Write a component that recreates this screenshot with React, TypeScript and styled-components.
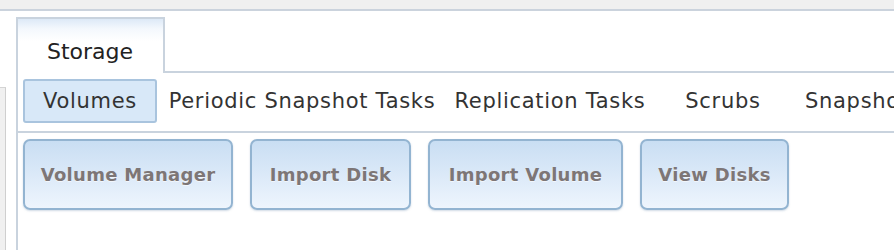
import React from "react";
import styled, { createGlobalStyle } from "styled-components";

const Global = createGlobalStyle`
  html, body { margin: 0; padding: 0; background: #ffffff; }
  body { font-family: "DejaVu Sans", Verdana, sans-serif; overflow: hidden; }
`;

const Page = styled.div`
  width: 894px;
  height: 250px;
  display: flex;
  flex-direction: column;
  background: #ffffff;
`;

const TopBar = styled.div`
  height: 9px;
  background: #f0f0f0;
  border-bottom: 2px solid #cbd3dd;
  flex-shrink: 0;
`;

const Main = styled.div`
  flex: 1;
  display: flex;
  padding-top: 6px;
  min-height: 0;
`;

const LeftStub = styled.div`
  width: 5px;
  margin-top: 70px;
  background: #f0f0f0;
  border-top: 1px solid #d4d4d4;
  border-right: 1px solid #cfcfcf;
  margin-right: 10px;
  flex-shrink: 0;
`;

const TabContainer = styled.div`
  flex: 1;
  display: flex;
  flex-direction: column;
  border-left: 2px solid #c9d3de;
  min-width: 0;
`;

const TabStrip = styled.div`
  display: flex;
  height: 56px;
  flex-shrink: 0;
`;

const Tab = styled.div`
  width: 147px;
  border-top: 2px solid #c9d3de;
  border-right: 2px solid #c9d3de;
  background: linear-gradient(to bottom, #dde9f7 0px, #f4f8fd 10px, #ffffff 22px);
  display: flex;
  align-items: flex-end;
  padding-left: 29px;
  padding-bottom: 9px;
  box-sizing: border-box;
  font-size: 22px;
  color: #222;
`;

const TabFill = styled.div`
  flex: 1;
  border-bottom: 2px solid #c9d3de;
`;

const SubTabs = styled.div`
  display: flex;
  align-items: flex-start;
  height: 60px;
  padding: 6px 0 0 5px;
  box-sizing: border-box;
  border-bottom: 2px solid #c9d3de;
  white-space: nowrap;
  overflow: hidden;
`;

const SubTab = styled.div<{ $active?: boolean; $w: number }>`
  height: 44px;
  width: ${(p) => p.$w}px;
  flex-shrink: 0;
  box-sizing: border-box;
  display: flex;
  align-items: center;
  justify-content: center;
  font-size: 21px;
  letter-spacing: 0.7px;
  color: #333;
  border-radius: 3px;
  border: 2px solid ${(p) => (p.$active ? "#a9c4de" : "transparent")};
  background: ${(p) => (p.$active ? "#d8e8f8" : "transparent")};
`;

const LastSubTab = styled(SubTab)`
  justify-content: flex-start;
  padding-left: 10px;
`;

const ButtonRow = styled.div`
  display: flex;
  gap: 17px;
  padding: 6px 0 0 5px;
`;

const ActionButton = styled.div<{ $w: number }>`
  width: ${(p) => p.$w}px;
  height: 71px;
  box-sizing: border-box;
  border: 2px solid #93b4d1;
  border-radius: 7px;
  background: linear-gradient(to bottom, #c9def3 0%, #dbe9f8 50%, #eef5fd 100%);
  box-shadow: 0 1px 2px rgba(120, 150, 180, 0.35);
  display: flex;
  align-items: center;
  justify-content: center;
  font-size: 18px;
  letter-spacing: 0.3px;
  font-weight: bold;
  color: #7d7676;
  text-shadow: 0 1px 0 rgba(255, 255, 255, 0.6);
`;

export default function App() {
  return (
    <Page>
      <Global />
      <TopBar />
      <Main>
        <LeftStub />
        <TabContainer>
          <TabStrip>
            <Tab>Storage</Tab>
            <TabFill />
          </TabStrip>
          <SubTabs>
            <SubTab $active $w={134}>Volumes</SubTab>
            <SubTab $w={290}>Periodic Snapshot Tasks</SubTab>
            <SubTab $w={206}>Replication Tasks</SubTab>
            <SubTab $w={140}>Scrubs</SubTab>
            <LastSubTab $w={140}>Snapshots</LastSubTab>
          </SubTabs>
          <ButtonRow>
            <ActionButton $w={210}>Volume Manager</ActionButton>
            <ActionButton $w={161}>Import Disk</ActionButton>
            <ActionButton $w={195}>Import Volume</ActionButton>
            <ActionButton $w={149}>View Disks</ActionButton>
          </ButtonRow>
        </TabContainer>
      </Main>
    </Page>
  );
}
